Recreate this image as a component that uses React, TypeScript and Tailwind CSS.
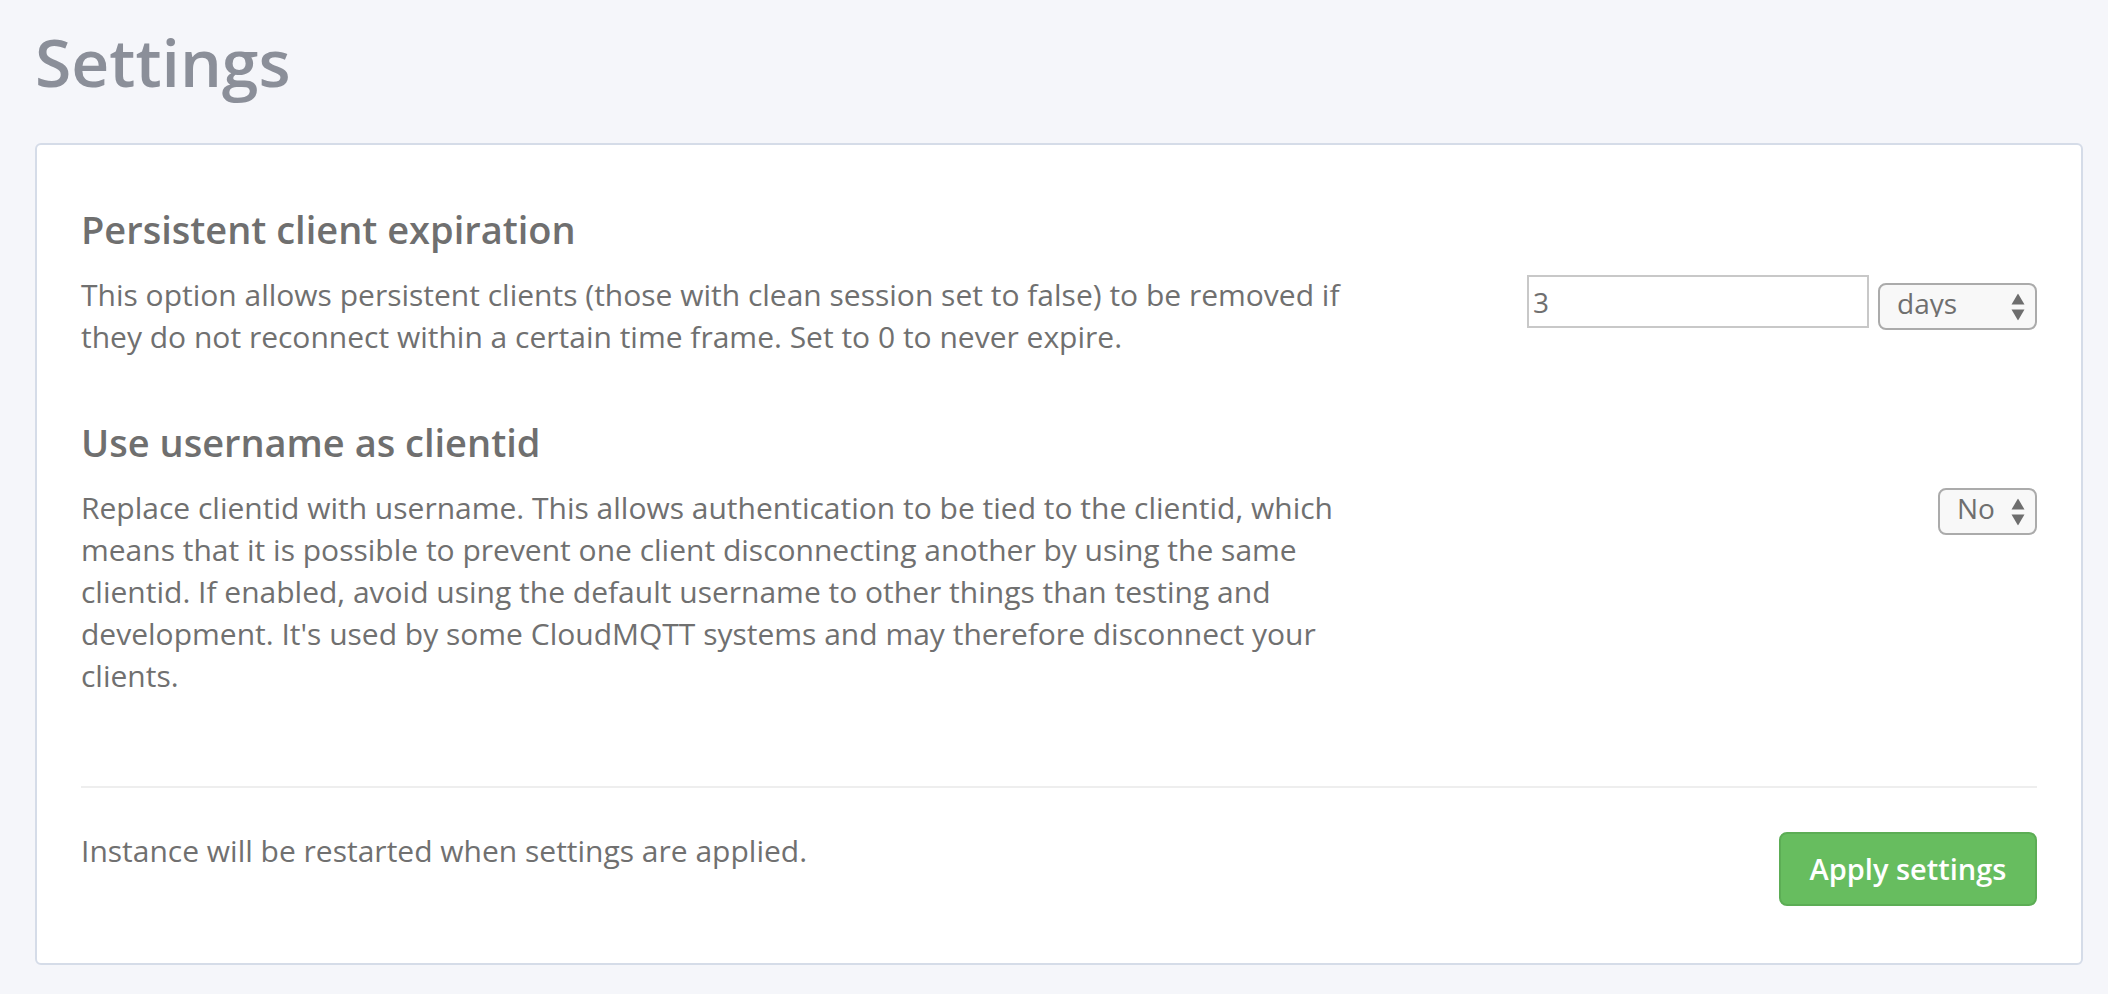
import React from "react";

const font = { fontFamily: '"Open Sans", "Noto Sans", sans-serif' };

function Arrows() {
  return (
    <svg
      className="pointer-events-none absolute right-[12px] top-1/2 -translate-y-1/2"
      width="14"
      height="27"
      viewBox="0 0 14 27"
    >
      <polygon points="7,0 13.5,11 0.5,11" fill="#6e6e6e" />
      <polygon points="0.5,16 13.5,16 7,27" fill="#6e6e6e" />
    </svg>
  );
}

function Select({ value, options, width }: { value: string; options: string[]; width: string }) {
  return (
    <div className={`relative ${width}`}>
      <select
        defaultValue={value}
        className="h-[47px] w-full appearance-none rounded-[8px] border-2 border-[#ababab] bg-[#f8f8f8] pl-[17px] pr-[34px] pb-[7px] text-[28px] leading-none text-[#6f6f6f] outline-none"
        style={font}
      >
        {options.map((o) => (
          <option key={o}>{o}</option>
        ))}
      </select>
      <Arrows />
    </div>
  );
}

export default function App() {
  return (
    <div className="min-h-screen bg-[#f5f6fa] pl-[35px] pr-[25px] pt-[28px] pb-[30px]" style={font}>
      <h1 className="text-[66px] font-semibold leading-[66px] text-[#8b8f99]">Settings</h1>

      <div className="mt-[49px] rounded-[6px] border-2 border-[#d5dce8] bg-white px-[44px] pt-[60px] pb-[57px]">
        <section>
          <h2 className="text-[38px] font-semibold leading-[48px] text-[#6f6f6f]">
            Persistent client expiration
          </h2>
          <div className="mt-[21px] flex items-start justify-between">
            <p className="w-[1300px] text-[30px] leading-[42px] text-[#707070]">
              This option allows persistent clients (those with clean session set to false) to be removed if
              they do not reconnect within a certain time frame. Set to 0 to never expire.
            </p>
            <div className="flex items-start gap-[9px] pt-[1px]">
              <input
                readOnly
                value="3"
                className="h-[53px] w-[342px] border-2 border-[#c8c8c8] bg-white px-[4px] text-[28px] text-[#6f6f6f] outline-none"
                style={font}
              />
              <div className="mt-[8px]">
                <Select value="days" options={["minutes", "hours", "days", "weeks"]} width="w-[159px]" />
              </div>
            </div>
          </div>
        </section>

        <section className="mt-[60px]">
          <h2 className="text-[38px] font-semibold leading-[48px] text-[#6f6f6f]">Use username as clientid</h2>
          <div className="mt-[21px] flex items-start justify-between">
            <p className="w-[1300px] text-[30px] leading-[42px] text-[#707070]">
              Replace clientid with username. This allows authentication to be tied to the clientid, which means
              that it is possible to prevent one client disconnecting another by using the same clientid. If
              enabled, avoid using the default username to other things than testing and development. It's used by
              some CloudMQTT systems and may therefore disconnect your clients.
            </p>
            <div className="pt-[1px]">
              <Select value="No" options={["No", "Yes"]} width="w-[99px]" />
            </div>
          </div>
        </section>

        <div className="mt-[89px] border-t-2 border-[#eeeeee]" />

        <div className="mt-[42px] flex items-start justify-between">
          <p className="text-[30px] leading-[42px] text-[#707070]">Instance will be restarted when settings are applied.</p>
          <button
            type="button"
            className="mt-[2px] h-[74px] w-[258px] rounded-[8px] border-2 border-[#5cad55] bg-[#67bd5f] text-[29px] font-semibold text-white"
            style={font}
          >
            Apply settings
          </button>
        </div>
      </div>
    </div>
  );
}
